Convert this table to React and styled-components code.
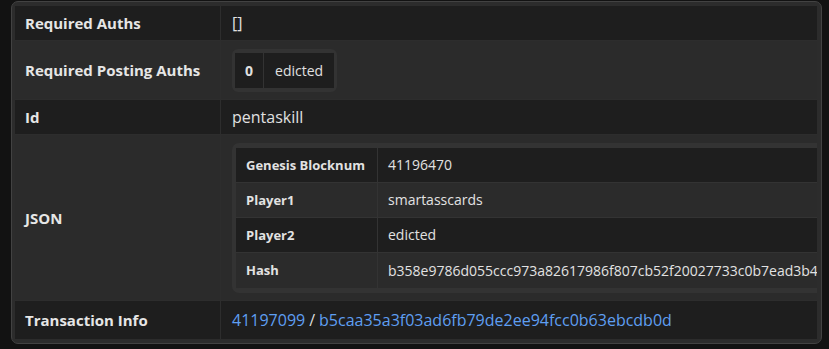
import React from "react";
import styled, { createGlobalStyle } from "styled-components";

const Global = createGlobalStyle`
  html, body { margin: 0; padding: 0; background: #121212; }
  body { font-family: "Open Sans", "Noto Sans", sans-serif; color: #e4e4e4; }
`;

const Panel = styled.div`
  margin: 1px 0 0 11px;
  width: 811px;
  box-sizing: border-box;
  background: #2c2c2c;
  border: 1px solid #424242;
  border-radius: 7px;
  padding: 4px 4px 4px 3px;
`;

const Table = styled.div`
  display: grid;
  grid-template-columns: 205px minmax(0, 1fr);
  gap: 1px;
  background: #2d2d2d;
`;

const Cell = styled.div`
  display: flex;
  align-items: center;
  box-sizing: border-box;
  min-height: ${(p) => p.$h || 34}px;
  padding: 0 10px;
  background: ${(p) => (p.$alt ? "#2b2b2b" : "#1e1e1e")};
  overflow: hidden;
  white-space: nowrap;
`;

const Label = styled(Cell)`
  font-size: 15px;
  font-weight: 700;
  color: #e6e6e6;
`;

const Value = styled(Cell)`
  padding-left: 11px;
  font-size: 16px;
  color: #e0e0e0;
`;

const Group = styled.div`
  display: flex;
  gap: 1px;
  background: #333333;
  border: 3px solid #333333;
  border-radius: 6px;
  padding: 1px 0;
`;

const Chip = styled.div`
  display: flex;
  align-items: center;
  height: 35px;
  padding: 0 ${(p) => (p.$bold ? 10 : 11)}px;
  background: #1e1e1e;
  font-weight: ${(p) => (p.$bold ? 700 : 400)};
  font-size: 14px;
`;

const Nested = styled.div`
  display: grid;
  grid-template-columns: 141px max-content;
  gap: 1px;
  background: #333333;
  border: 4px solid #333333;
  border-radius: 7px;
  padding: 1px 0;
`;

const NCell = styled.div`
  display: flex;
  align-items: center;
  height: ${(p) => p.$h || 34}px;
  padding: 0 10px;
  background: ${(p) => (p.$alt ? "#2b2b2b" : "#1e1e1e")};
  font-size: ${(p) => (p.$bold ? 13 : 14)}px;
  font-weight: ${(p) => (p.$bold ? 700 : 400)};
  color: #e2e2e2;
`;

const Link = styled.a`
  color: #5e9ff2;
  text-decoration: none;
`;

const Slash = styled.span`
  color: #dcdcdc;
  padding: 0 4px;
`;

const nested = [
  ["Genesis Blocknum", "41196470"],
  ["Player1", "smartasscards"],
  ["Player2", "edicted"],
  ["Hash", "b358e9786d055ccc973a82617986f807cb52f20027733c0b7ead3b4"],
];

export default function App() {
  return (
    <>
      <Global />
      <Panel>
        <Table>
          <Label>Required Auths</Label>
          <Value>[]</Value>

          <Label $alt $h={58}>Required Posting Auths</Label>
          <Value $alt $h={58}>
            <Group>
              <Chip $bold>0</Chip>
              <Chip>edicted</Chip>
            </Group>
          </Value>

          <Label>Id</Label>
          <Value>pentaskill</Value>

          <Label $alt $h={165}>JSON</Label>
          <Value $alt $h={165}>
            <Nested>
              {nested.map(([k, v], i) => (
                <React.Fragment key={k}>
                  <NCell $bold $alt={i % 2 === 1} $h={i === 3 ? 35 : 34}>{k}</NCell>
                  <NCell $alt={i % 2 === 1} $h={i === 3 ? 35 : 34}>{v}</NCell>
                </React.Fragment>
              ))}
            </Nested>
          </Value>

          <Label $h={38}>Transaction Info</Label>
          <Value $h={38}>
            <Link>41197099</Link>
            <Slash>/</Slash>
            <Link>b5caa35a3f03ad6fb79de2ee94fcc0b63ebcdb0d</Link>
          </Value>
        </Table>
      </Panel>
    </>
  );
}
